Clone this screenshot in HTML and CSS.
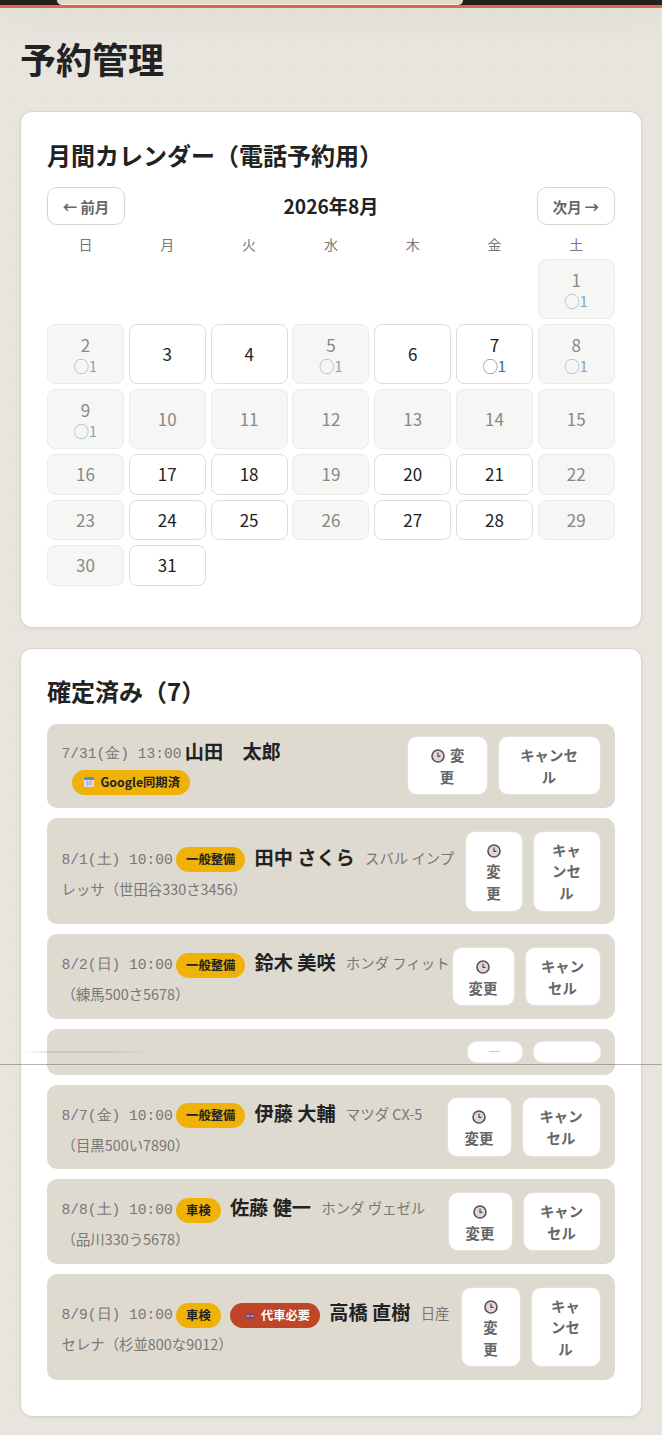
FILE: index.html
```html
<!DOCTYPE html>
<html lang="ja">
<head>
<meta charset="utf-8">
<title>予約管理</title>
<link rel="stylesheet" href="styles.css">
</head>
<body>
<header class="topbar"><div class="topbar-tab"></div></header>
<main class="page">
  <h1 class="page-title">予約管理</h1>

  <section class="card card-calendar">
    <h2 class="card-title">月間カレンダー（電話予約用）</h2>
    <div class="month-nav">
      <button class="nav-btn">← 前月</button>
      <div class="month-label">2026年8月</div>
      <button class="nav-btn">次月 →</button>
    </div>
    <div class="cal-grid">
      <div class="dow">日</div><div class="dow">月</div><div class="dow">火</div><div class="dow">水</div><div class="dow">木</div><div class="dow">金</div><div class="dow">土</div>

      <div class="gap"></div><div class="gap"></div><div class="gap"></div><div class="gap"></div><div class="gap"></div><div class="gap"></div>
      <div class="day off tall">1<span class="slot">◯1</span></div>

      <div class="day off tall">2<span class="slot">◯1</span></div>
      <div class="day tall">3</div>
      <div class="day tall">4</div>
      <div class="day off tall">5<span class="slot">◯1</span></div>
      <div class="day tall">6</div>
      <div class="day tall">7<span class="slot open">◯1</span></div>
      <div class="day off tall">8<span class="slot">◯1</span></div>

      <div class="day off tall">9<span class="slot">◯1</span></div>
      <div class="day off tall">10</div>
      <div class="day off tall">11</div>
      <div class="day off tall">12</div>
      <div class="day off tall">13</div>
      <div class="day off tall">14</div>
      <div class="day off tall">15</div>

      <div class="day off">16</div>
      <div class="day">17</div>
      <div class="day">18</div>
      <div class="day off">19</div>
      <div class="day">20</div>
      <div class="day">21</div>
      <div class="day off">22</div>

      <div class="day off">23</div>
      <div class="day">24</div>
      <div class="day">25</div>
      <div class="day off">26</div>
      <div class="day">27</div>
      <div class="day">28</div>
      <div class="day off">29</div>

      <div class="day off">30</div>
      <div class="day">31</div>
    </div>
  </section>

  <section class="card card-list">
    <h2 class="card-title">確定済み（7）</h2>
    <div class="res-list">

      <article class="res">
        <div class="res-info">
          <span class="res-date">7/31(金) 13:00</span>
          <strong class="res-name">山田　太郎</strong>
          <span class="tag tag-google"><svg class="tag-icon" viewBox="0 0 12 12"><rect x="1" y="1" width="10" height="10" rx="1.2" fill="#dcd8ee"/><rect x="1" y="1" width="10" height="3" rx="1" fill="#4d8fd0"/><path d="M3 6h6M3 8h6M4.5 5v5M7.5 5v5" stroke="#9c98c4" stroke-width=".6"/></svg>Google同期済</span>
        </div>
        <div class="res-actions">
          <button class="act act-81"><svg class="clock" viewBox="0 0 14 14"><circle cx="7" cy="7" r="6" fill="#e6d3de" stroke="#555" stroke-width="1.6"/><path d="M7 3.5V7.4H9.4" fill="none" stroke="#444" stroke-width="1.1"/></svg> 変更</button>
          <button class="act act-103">キャンセル</button>
        </div>
      </article>

      <article class="res">
        <div class="res-info">
          <span class="res-date">8/1(土) 10:00</span>
          <span class="tag tag-kind">一般整備</span>
          <strong class="res-name">田中 さくら</strong>
          <span class="res-car">スバル インプレッサ（世田谷330さ3456）</span>
        </div>
        <div class="res-actions">
          <button class="act act-58"><svg class="clock" viewBox="0 0 14 14"><circle cx="7" cy="7" r="6" fill="#e6d3de" stroke="#555" stroke-width="1.6"/><path d="M7 3.5V7.4H9.4" fill="none" stroke="#444" stroke-width="1.1"/></svg> 変更</button>
          <button class="act act-68">キャンセル</button>
        </div>
      </article>

      <article class="res">
        <div class="res-info">
          <span class="res-date">8/2(日) 10:00</span>
          <span class="tag tag-kind">一般整備</span>
          <strong class="res-name">鈴木 美咲</strong>
          <span class="res-car">ホンダ フィット（練馬500さ5678）</span>
        </div>
        <div class="res-actions">
          <button class="act act-63"><svg class="clock" viewBox="0 0 14 14"><circle cx="7" cy="7" r="6" fill="#e6d3de" stroke="#555" stroke-width="1.6"/><path d="M7 3.5V7.4H9.4" fill="none" stroke="#444" stroke-width="1.1"/></svg> 変更</button>
          <button class="act act-76">キャンセル</button>
        </div>
      </article>

      <article class="res res-glitch">
        <div class="glitch-smear"></div>
        <div class="res-actions">
          <div class="act act-56 act-blank"><span class="blank-mark"></span></div>
          <div class="act act-68 act-blank"></div>
        </div>
      </article>

      <article class="res">
        <div class="res-info">
          <span class="res-date">8/7(金) 10:00</span>
          <span class="tag tag-kind">一般整備</span>
          <strong class="res-name">伊藤 大輔</strong>
          <span class="res-car">マツダ CX-5（目黒500い7890）</span>
        </div>
        <div class="res-actions">
          <button class="act act-65"><svg class="clock" viewBox="0 0 14 14"><circle cx="7" cy="7" r="6" fill="#e6d3de" stroke="#555" stroke-width="1.6"/><path d="M7 3.5V7.4H9.4" fill="none" stroke="#444" stroke-width="1.1"/></svg> 変更</button>
          <button class="act act-79">キャンセル</button>
        </div>
      </article>

      <article class="res">
        <div class="res-info">
          <span class="res-date">8/8(土) 10:00</span>
          <span class="tag tag-kind">車検</span>
          <strong class="res-name">佐藤 健一</strong>
          <span class="res-car">ホンダ ヴェゼル（品川330う5678）</span>
        </div>
        <div class="res-actions">
          <button class="act act-65"><svg class="clock" viewBox="0 0 14 14"><circle cx="7" cy="7" r="6" fill="#e6d3de" stroke="#555" stroke-width="1.6"/><path d="M7 3.5V7.4H9.4" fill="none" stroke="#444" stroke-width="1.1"/></svg> 変更</button>
          <button class="act act-78">キャンセル</button>
        </div>
      </article>

      <article class="res">
        <div class="res-info">
          <span class="res-date">8/9(日) 10:00</span>
          <span class="tag tag-kind">車検</span>
          <span class="tag tag-loan"><svg class="tag-icon" viewBox="0 0 14 12"><path d="M2 9V6.5L3.8 3h6.4L12 6.5V9Z" fill="#5a4a90"/><rect x="3" y="5" width="3.4" height="2" fill="#e08a9a"/><rect x="7.6" y="5" width="3.4" height="2" fill="#e08a9a"/></svg>代車必要</span>
          <strong class="res-name">高橋 直樹</strong>
          <span class="res-car">日産 セレナ（杉並800な9012）</span>
        </div>
        <div class="res-actions">
          <button class="act act-60"><svg class="clock" viewBox="0 0 14 14"><circle cx="7" cy="7" r="6" fill="#e6d3de" stroke="#555" stroke-width="1.6"/><path d="M7 3.5V7.4H9.4" fill="none" stroke="#444" stroke-width="1.1"/></svg> 変更</button>
          <button class="act act-70">キャンセル</button>
        </div>
      </article>

    </div>
  </section>
</main>
<div class="scan-line"></div>
</body>
</html>
```
FILE: styles.css
```css
* { box-sizing: border-box; }

html, body { margin: 0; padding: 0; }

body {
  position: relative;
  min-height: 1435px;
  background-color: #e8e5de;
  background-image: radial-gradient(circle, #e1ded6 1px, transparent 1.2px);
  background-size: 28px 28px;
  color: #222;
  font-family: "Noto Sans CJK JP", "Noto Sans", sans-serif;
}

.topbar {
  height: 8px;
  background: #25211f;
  border-bottom: 3px solid #d9694a;
  box-shadow: 0 6px 30px rgba(90, 80, 60, .14);
  padding-left: 57px;
}

.topbar-tab {
  width: 406px;
  height: 5px;
  background: #e3dccd;
  border: 1px solid #f4efe6;
  border-top: 0;
  border-radius: 0 0 6px 6px;
}

.page { padding: 0 20px; }

.page-title {
  margin: 0;
  padding-top: 25px;
  height: 103px;
  font-size: 36px;
  line-height: 50px;
  font-weight: 700;
  color: #222;
}

.card {
  background: #fff;
  border: 1px solid #d8d4ca;
  border-radius: 12px;
  box-shadow: 0 1px 3px rgba(0, 0, 0, .06);
}

.card-calendar { padding: 24px 26px 41px; margin-bottom: 20px; }
.card-list { padding: 23px 26px 36px; }

.card-title {
  margin: 0;
  font-size: 24px;
  line-height: 38px;
  font-weight: 700;
  color: #222;
}

.month-nav {
  display: flex;
  align-items: center;
  justify-content: space-between;
  margin-top: 13px;
}

.nav-btn {
  width: 78px;
  height: 38px;
  padding: 0;
  background: #fff;
  border: 1px solid #d8d4ca;
  border-radius: 10px;
  color: #666;
  font-family: inherit;
  font-size: 14.4px;
  font-weight: 700;
}

.month-label { font-size: 19.2px; line-height: 38px; font-weight: 700; color: #222; }

.cal-grid {
  display: grid;
  grid-template-columns: repeat(7, 77px);
  column-gap: 4.8px;
  row-gap: 5px;
  margin-top: 2px;
}

.dow {
  height: 28px;
  margin-bottom: -1px;
  text-align: center;
  font-size: 14px;
  line-height: 34px;
  color: #777;
}

.gap { height: 0; }

.day {
  display: flex;
  flex-direction: column;
  align-items: center;
  justify-content: center;
  height: 40.5px;
  background: #fff;
  border: 1px solid #e0ddd6;
  border-radius: 8px;
  font-size: 17px;
  line-height: 22px;
  color: #222;
}

.day.tall { height: 60px; }

.day.off { background: #f6f6f5; border-color: #ebebe8; color: #888; }

.slot {
  font-size: 15px;
  line-height: 19px;
  color: #86a6bd;
}

.slot.open { color: #3f6a8a; }

.card-list .card-title { margin-bottom: 14px; }

.res-list { display: flex; flex-direction: column; gap: 10px; }

.res {
  position: relative;
  display: flex;
  align-items: center;
  justify-content: space-between;
  padding: 12.7px 14.5px;
  background: #dedad0;
  border-radius: 10px;
}

.res-info {
  flex: 1 1 0;
  min-width: 0;
  margin-bottom: -3px;
  font-size: 14.4px;
  line-height: 31px;
}

.res-date {
  font-family: "Liberation Mono", monospace;
  font-size: 14.6px;
  line-height: 20px;
  color: #777;
}

.res-name {
  margin-right: 7px;
  font-size: 19.2px;
  line-height: 20px;
  vertical-align: -1px;
  font-weight: 700;
  color: #222;
}

.res-car { font-size: 14.4px; line-height: 20px; color: #777; }

.tag {
  display: inline-flex;
  align-items: center;
  height: 25px;
  padding: 0 10px;
  border-radius: 13px;
  vertical-align: middle;
  font-size: 12.3px;
  font-weight: 700;
  line-height: 25px;
}

.tag-kind { background: #f0b208; color: #222; margin-right: 6px; }
.tag-google { background: #f0b208; color: #222; margin-left: 10px; vertical-align: 1px; }
.tag-loan { background: #c04428; color: #fff; margin-right: 6px; }

.tag-icon { width: 12px; height: 12px; margin: 0 6px 0 1px; }
.tag-loan .tag-icon { margin: 0 5px 0 4px; }

.res-actions { display: flex; flex: none; gap: 10px; }

.act {
  display: block;
  padding: 7px 15px;
  background: #fff;
  border: 1px solid #e4e1da;
  border-radius: 10px;
  color: #666;
  font-family: inherit;
  font-size: 14.4px;
  font-weight: 700;
  line-height: 21.6px;
}

.clock { width: 14px; height: 14px; margin: 0 1.5px; vertical-align: -2px; }

.act-56 { width: 56px; }
.act-58 { width: 58px; }
.act-60 { width: 60px; }
.act-63 { width: 63px; }
.act-65 { width: 65px; }
.act-68 { width: 68px; }
.act-70 { width: 70px; }
.act-76 { width: 76px; }
.act-78 { width: 78px; }
.act-79 { width: 79px; }
.act-81 { width: 81px; }
.act-103 { width: 103px; }

.res-glitch { justify-content: flex-end; height: 46px; }
.res-glitch .res-actions { align-items: center; }

.act-blank {
  display: flex;
  align-items: center;
  justify-content: center;
  height: 22px;
  padding: 0;
  border-color: #efeee9;
}

.blank-mark { width: 11px; height: 1px; background: #c8c8c8; }

.glitch-smear {
  position: absolute;
  left: -24px;
  top: 22px;
  width: 130px;
  height: 2px;
  background: linear-gradient(90deg, transparent, rgba(150, 145, 130, .3) 25%, rgba(150, 145, 130, .25) 65%, transparent);
}

.scan-line {
  position: absolute;
  left: 0;
  right: 0;
  top: 1064px;
  height: 1px;
  background: rgba(90, 90, 80, .45);
}
```
